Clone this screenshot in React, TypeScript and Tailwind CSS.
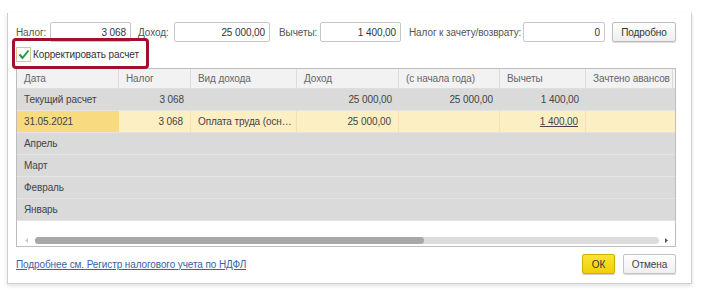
import React from "react";

const cols = [102, 72, 106, 102, 101, 86, 87];

const headers = ["Дата", "Налог", "Вид дохода", "Доход", "(с начала года)", "Вычеты", "Зачтено авансов"];

const months = ["Апрель", "Март", "Февраль", "Январь"];

const Field = ({ value, width }: { value: string; width: number }) => (
  <div
    className="h-[20px] border border-[#c8c8c8] rounded-[2px] bg-white flex items-center justify-end pr-[4px] text-[#333]"
    style={{ width }}
  >
    {value}
  </div>
);

const Cell = ({
  w,
  children,
  right,
  className = "",
}: {
  w: number;
  children?: React.ReactNode;
  right?: boolean;
  className?: string;
}) => (
  <div
    className={`h-full flex items-center px-[7px] overflow-hidden whitespace-nowrap ${right ? "justify-end" : ""} ${className}`}
    style={{ width: w }}
  >
    {children}
  </div>
);

const App = () => {
  return (
    <div
      className="w-[724px] h-[291px] bg-white text-[10px] tracking-[-0.1px] text-[#444] overflow-hidden"
      style={{ fontFamily: '"Liberation Sans", Arial, sans-serif' }}
    >
      <div className="relative mt-[13px] ml-[7px] w-[685px] h-[271px] border-x border-b border-[#cfcfcf] shadow-[0_2px_4px_rgba(0,0,0,0.12)] pl-[8px] pr-[14px] pt-[9px]">
        {/* top fields */}
        <div className="flex items-center h-[20px] text-[#555]">
          <span className="w-[34px]">Налог:</span>
          <Field value="3 068" width={81} />
          <span className="ml-[7px] w-[36px]">Доход:</span>
          <Field value="25 000,00" width={96} />
          <span className="ml-[9px] w-[41px]">Вычеты:</span>
          <Field value="1 400,00" width={81} />
          <span className="ml-[8px] w-[114px] whitespace-nowrap">Налог к зачету/возврату:</span>
          <Field value="0" width={82} />
          <button className="ml-[7px] w-[64px] h-[20px] border border-[#bdbdbd] rounded-[2px] bg-gradient-to-b from-white to-[#eeeeee] shadow-[0_1px_1px_rgba(0,0,0,0.15)] text-[#333]">
            Подробно
          </button>
        </div>

        {/* checkbox */}
        <div className="mt-[4px] h-[16px] flex items-center">
          <div className="w-[15px] h-[15px] border border-[#d6c98e] bg-white flex items-center justify-center">
            <svg width="12" height="11" viewBox="0 0 12 11">
              <path d="M1.5 5.5 L4.5 9 L10.5 1.5" fill="none" stroke="#1f9a3c" strokeWidth="2" />
            </svg>
          </div>
          <span className="ml-[2px] text-[#333]">Корректировать расчет</span>
        </div>
        <div className="absolute left-[4px] top-[25px] w-[137px] h-[31px] border-[3px] border-[#a3102d] rounded-[4px]" />

        {/* table */}
        <div className="mt-[6px] w-[660px] h-[179px] border border-[#bdbdbd] flex flex-col">
          <div className="flex h-[20px] bg-[#f2f2f2] border-b border-[#dedede] text-[#666]">
            {headers.map((h, i) => (
              <Cell key={h} w={cols[i]} className="border-r border-[#dcdcdc]">
                {h}
              </Cell>
            ))}
          </div>
          <div className="flex h-[22px] bg-[#dadada] border-b border-[#e4e4e4]">
            <Cell w={cols[0]}>Текущий расчет</Cell>
            <Cell w={cols[1]} right>3 068</Cell>
            <Cell w={cols[2]} />
            <Cell w={cols[3]} right>25 000,00</Cell>
            <Cell w={cols[4]} right>25 000,00</Cell>
            <Cell w={cols[5]} right>1 400,00</Cell>
            <Cell w={cols[6]} />
          </div>
          <div className="flex h-[22px] bg-[#fcefc3] border-b border-[#e4e4e4]">
            <Cell w={cols[0]} className="bg-[#f8da80]">31.05.2021</Cell>
            <Cell w={cols[1]} right className="border-r border-[#f3e2ae]">3 068</Cell>
            <Cell w={cols[2]} className="border-r border-[#f3e2ae]">Оплата труда (осн…</Cell>
            <Cell w={cols[3]} right className="border-r border-[#f3e2ae]">25 000,00</Cell>
            <Cell w={cols[4]} right className="border-r border-[#f3e2ae]" />
            <Cell w={cols[5]} right className="border-r border-[#f3e2ae]">
              <span className="underline">1 400,00</span>
            </Cell>
            <Cell w={cols[6]} />
          </div>
          {months.map((m) => (
            <div key={m} className="flex h-[22px] bg-[#dadada] border-b border-[#e4e4e4] last:border-b-0">
              <Cell w={cols[0]}>{m}</Cell>
            </div>
          ))}
          <div className="flex-1 bg-white flex items-end pb-[2px] pl-[8px] pr-[6px]">
            <div className="flex items-center w-full h-[7px]">
              <svg width="4" height="5" viewBox="0 0 4 5" className="mr-[6px]">
                <path d="M3 0 L0 2.5 L3 5 Z" fill="#c8c8c8" />
              </svg>
              <div className="flex-1 h-[7px] rounded-full bg-[#dcdcdc] flex">
                <div className="w-[389px] h-full rounded-full bg-[#a8a8a8]" />
              </div>
              <svg width="4" height="5" viewBox="0 0 4 5" className="ml-[6px]">
                <path d="M0 0 L3 2.5 L0 5 Z" fill="#555" />
              </svg>
            </div>
          </div>
        </div>

        {/* footer */}
        <div className="mt-[7px] flex items-center h-[20px] w-[660px]">
          <a className="text-[#3a63a3] underline flex-1">Подробнее см. Регистр налогового учета по НДФЛ</a>
          <button className="w-[33px] h-[20px] border border-[#cdb100] rounded-[2px] bg-gradient-to-b from-[#fbe333] to-[#f0cf00] shadow-[0_1px_1px_rgba(0,0,0,0.2)] text-[#333]">
            ОК
          </button>
          <button className="ml-[8px] w-[53px] h-[20px] border border-[#c4c4c4] rounded-[2px] bg-gradient-to-b from-white to-[#efefef] shadow-[0_1px_1px_rgba(0,0,0,0.15)] text-[#444]">
            Отмена
          </button>
        </div>
      </div>
    </div>
  );
};

export default App;
